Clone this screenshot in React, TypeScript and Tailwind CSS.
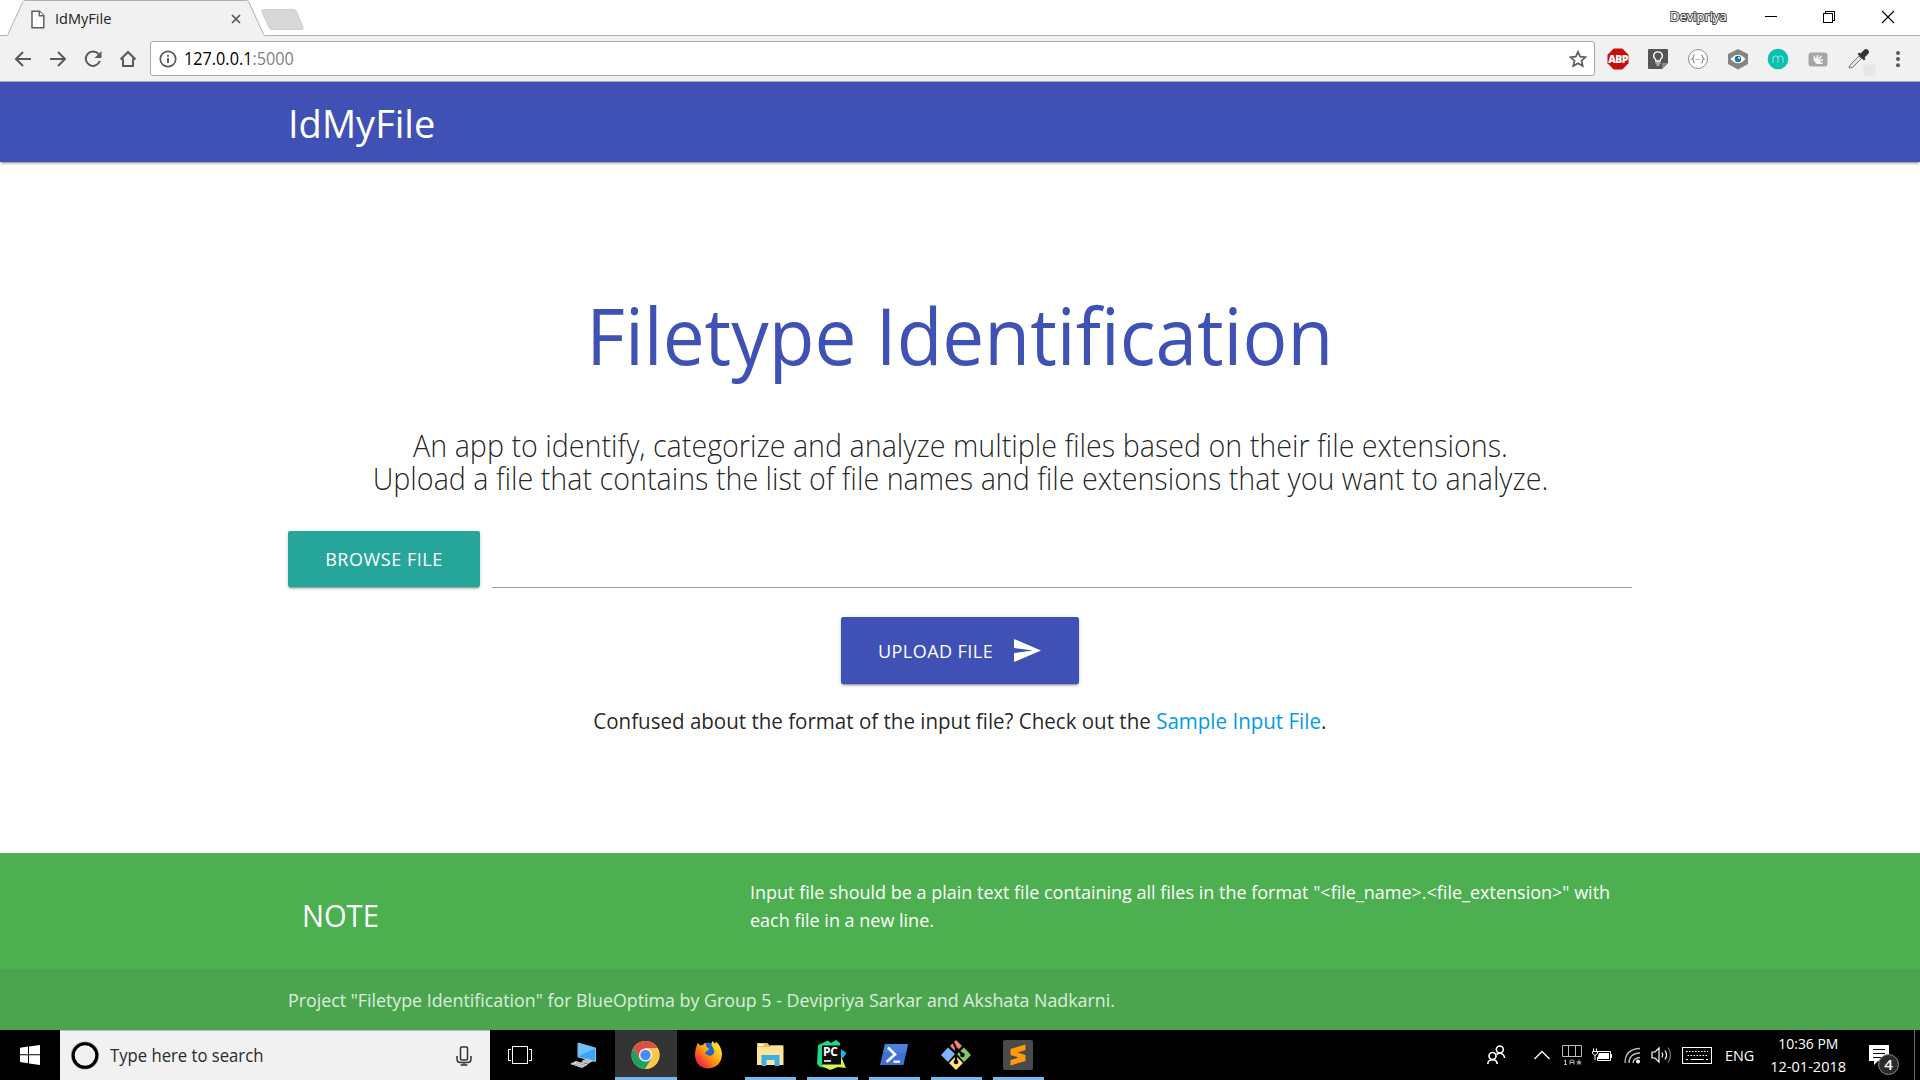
import type { ReactNode } from "react";

const shadow =
  "shadow-[0_2px_2px_0_rgba(0,0,0,0.14),0_1px_5px_0_rgba(0,0,0,0.12),0_3px_1px_-2px_rgba(0,0,0,0.2)]";

function TabStrip() {
  return (
    <div className="relative flex h-9 shrink-0 items-start bg-white">
      <svg className="absolute inset-0" width="1920" height="36" viewBox="0 0 1920 36" fill="none">
        <path d="M0 35.5H7C8 35.5 8 34 9 32L22.5 2.5C23.5 .5 24 .5 25 .5H246.500C248 .5 248.500 1 249 2.500L263 33C264 35.500 264 35.500 265 35.500H1920V36H0Z" fill="#f1f1f1" />
        <path d="M0 35.500H7C8 35.500 8 34 9 32L22.500 2.500C23.500 .5 24 .5 25 .5H246.500C248 .5 248.500 1 249 2.500L263 33C264 35.500 264 35.500 265 35.500H1920" stroke="#b0b0b0" />
        <path d="M263.500 9.500H293.500Q295.500 9.500 296.500 11.500L303 27Q304 29.500 301.500 29.500H272Q270 29.500 269 27.500L262 12Q261 9.500 263.500 9.500Z" fill="#d8d8d8" stroke="#cfcfcf" />
      </svg>
      <div className="relative flex h-[38px] w-[265px] items-center pl-[31px]">
        <svg width="14" height="19" viewBox="0 0 14 19" fill="#fff" stroke="#5f5f5f" strokeWidth="1.500">
          <path d="M1 1.200H8.500L12.800 5.500V17.800H1Z" />
          <path d="M8.300 1.200V5.800H12.800" />
        </svg>
        <span className="mb-0.5 ml-[10px] w-[175px] origin-left scale-x-[0.970] text-[15px] leading-5 text-[#222]">
          IdMyFile
        </span>
        <svg width="12" height="12" viewBox="0 0 12 12" stroke="#555" strokeWidth="1.700">
          <path d="M2 2L10 10M10 2L2 10" />
        </svg>
      </div>
      <div className="relative ml-auto flex h-8 items-center">
        <span className="w-[95px] text-[13px] leading-5 text-white [paint-order:stroke_fill] [-webkit-text-stroke:2px_#4a4a4a]">
          Devipriya
        </span>
        <svg width="155" height="32" viewBox="0 0 155 32" fill="none" stroke="#000" strokeWidth="1.100" shapeRendering="crispEdges">
          <path d="M0 16.500H12" />
          <path d="M58.500 13.500H67.500V22.500H58.500ZM60.500 13V11.500H69.500V20.500H68" />
          <path d="M117 11L129 23M129 11L117 23" shapeRendering="auto" />
        </svg>
      </div>
    </div>
  );
}

function Ext({ children }: { children: ReactNode }) {
  return (
    <span className="flex w-10 shrink-0 items-center justify-center">
      <svg width="24" height="34" viewBox="0 0 24 34" fill="none" overflow="visible">
        {children}
      </svg>
    </span>
  );
}

function Toolbar() {
  return (
    <div className="flex h-[46px] shrink-0 items-center border-b border-[#b3b3b3] bg-[#f1f1f1]">
      <div className="flex w-[150px] shrink-0 items-center gap-[15px] pl-[13px] text-[#5a5a5a]">
        <svg width="20" height="20" viewBox="0 0 20 20" fill="none" stroke="currentColor" strokeWidth="2">
          <path d="M18 10H3.500M10 3L3 10L10 17" />
        </svg>
        <svg width="20" height="20" viewBox="0 0 20 20" fill="none" stroke="currentColor" strokeWidth="2">
          <path d="M2 10H16.500M10 3L17 10L10 17" />
        </svg>
        <svg width="20" height="20" viewBox="0 0 20 20" fill="none" stroke="currentColor" strokeWidth="2">
          <path d="M15.600 5.200A7.200 7.200 0 1 0 16.800 12" />
          <path d="M18.500 2V9H11.500Z" fill="currentColor" stroke="none" />
        </svg>
        <svg width="20" height="20" viewBox="0 0 20 20" fill="none" stroke="currentColor" strokeWidth="2">
          <path d="M2.500 10.500L10 3L17.500 10.500M5 9.500V17H15V9.500" />
        </svg>
      </div>
      <div className="flex h-[35px] w-[1445px] shrink-0 items-center rounded-[3px] border border-[#a8a8a8] bg-white pr-[7px] pl-[8px]">
        <svg width="18" height="18" viewBox="0 0 18 18" fill="none" stroke="#5a5a5a" strokeWidth="1.700">
          <circle cx="9" cy="9" r="7.700" />
          <path d="M9 8V13M9 5V6.700" strokeWidth="1.900" />
        </svg>
        <span className="mb-px ml-[7px] grow origin-left scale-x-[0.927] text-[17.500px] leading-6 text-black">
          127.0.0.1<span className="text-[#808080]">:5000</span>
        </span>
        <svg width="18" height="18" viewBox="0 0 18 18" fill="none" stroke="#5a5a5a" strokeWidth="1.700">
          <path d="M9 1.800L11.200 6.700L16.500 7.200L12.500 10.700L13.700 16L9 13.200L4.300 16L5.500 10.700L1.500 7.200L6.800 6.700Z" />
        </svg>
      </div>
      <div className="ml-[2.500px] flex">
        <Ext>
          <path d="M7.700 6.500H16.300L22.500 12.700V21.300L16.300 27.500H7.700L1.500 21.300V12.700Z" fill="#c70d0d" />
          <text x="12" y="21" textAnchor="middle" fontFamily="Open Sans" fontSize="10.500" fontWeight="800" letterSpacing="-0.600" fill="#fff">ABP</text>
        </Ext>
        <Ext>
          <path d="M3 7H21Q22 7 22 8V21L16 27H3Q2 27 2 26V8Q2 7 3 7Z" fill="#555" />
          <path d="M22 21L16 27V21Z" fill="#8a8a8a" />
          <path d="M9.700 19V17.500C6 15 7.500 9.800 12 9.800S18 15 14.300 17.500V19Z" stroke="#fff" strokeWidth="1.300" />
          <path d="M9.500 21H14.500M10.500 23H13.500" stroke="#fff" strokeWidth="1.200" />
        </Ext>
        <Ext>
          <circle cx="12" cy="17" r="9.500" fill="#fff" stroke="#8c8c8c" />
          <path d="M8.800 13Q7.500 13 7.500 14.500T6 17Q7.500 17 7.500 19T8.800 21M15.200 13Q16.500 13 16.500 14.500T18 17Q16.500 17 16.500 19T15.200 21M9.700 17.500H10.700M11.600 17.500H12.500M13.400 17.500H14.300" stroke="#8c8c8c" strokeWidth="1.200" />
        </Ext>
        <Ext>
          <path d="M12 7L22 12V22L12 27.500L2 22V12Z" fill="#858585" />
          <path d="M4.500 17Q12 8.500 19.500 17Q12 25.500 4.500 17Z" fill="#fff" />
          <circle cx="12" cy="17" r="3.200" fill="#1c78ab" />
          <circle cx="13" cy="16" r="1" fill="#fff" />
        </Ext>
        <Ext>
          <circle cx="12" cy="17" r="10.300" fill="#0bbfb0" />
          <path d="M7 21V14.500M7 17Q7 14 9.500 14T12 17V21M12 17Q12 14 14.500 14T17 17V21" stroke="#7be6dd" strokeWidth="1.100" />
        </Ext>
        <Ext>
          <rect x="2.500" y="10.500" width="19" height="14" rx="3" fill="#a5a5a5" />
          <path d="M8 13C6.500 17 8.500 21.500 12 22H16.500V20.500L13 20L17 18.500V17L13 18L16 14.500L15 13.500L12 17L12.500 13H11L10 17Z" fill="#f5f5f5" />
        </Ext>
        <Ext>
          <rect x="17.500" y="22.500" width="12" height="12" fill="#e6e6e6" />
          <path d="M3 26L4 23.200L13 14L15.500 16.500L6.500 25.500Z" fill="#e3e3e3" stroke="#777" />
          <path d="M11.500 12L13.300 10.500L14.500 11.500L18 8Q20 6 22 8T22 12L18.500 15.500L19.500 17L18 18.500Z" fill="#333" />
        </Ext>
        <Ext>
          <g fill="#5a5a5a">
            <circle cx="12" cy="11" r="2" />
            <circle cx="12" cy="17" r="2" />
            <circle cx="12" cy="23.300" r="2" />
          </g>
        </Ext>
      </div>
    </div>
  );
}

function Page() {
  return (
    <main className="flex grow flex-col bg-white text-black/87">
      <nav className={`relative flex h-20 items-center bg-[#3f51b5] ${shadow}`}>
        <div className="mx-auto w-[1344px] origin-left scale-x-[0.975] pt-px text-[39px] leading-[80px] text-white">
          IdMyFile
        </div>
      </nav>

      <div className="mx-auto flex w-[1344px] grow flex-col items-center">
        <h1 className="mt-[130px] scale-x-[0.958] text-[78px] leading-[86px] whitespace-nowrap text-[#3f51b5]">
          Filetype Identification
        </h1>
        <h5 className="mt-[51px] scale-x-[0.925] text-center text-[31px] leading-[33px] font-light whitespace-nowrap">
          An app to identify, categorize and analyze multiple files based on their file extensions.
          <br />
          Upload a file that contains the list of file names and file extensions that you want to analyze.
        </h5>
        <div className="mt-9 flex w-full">
          <button className={`h-14 w-48 rounded-xs bg-[#26a69a] text-[18px] tracking-[0.550px] text-white ${shadow}`}>
            BROWSE FILE
          </button>
          <div className="ml-3 h-[57px] grow border-b border-[#9e9e9e]" />
        </div>
        <button
          className={`mt-[29px] flex h-[67px] w-[238px] items-center rounded-xs bg-[#3f51b5] pl-[37px] text-[18px] tracking-[0.450px] text-white ${shadow}`}
        >
          <span className="w-[136px] pt-0.5 text-left">UPLOAD FILE</span>
          <svg width="27" height="23" viewBox="0 0 27 23" fill="#fff">
            <path d="M0 0L27 11.500L0 23V14L19 11.500L0 9Z" />
          </svg>
        </button>
        <p className="mt-[20px] scale-x-[0.933] text-[22px] leading-8 whitespace-nowrap">
          Confused about the format of the input file? Check out the{" "}
          <span className="text-[#039be5]">Sample Input File</span>.
        </p>
      </div>

      <footer className="shrink-0 bg-[#4caf50] text-white">
        <div className="mx-auto flex h-[116px] w-[1344px]">
          <div className="ml-[14px] w-[448px] shrink-0 origin-left scale-x-[0.940] pt-[42px] text-[31px] leading-10">NOTE</div>
          <p className="shrink-0 origin-left scale-x-[0.947] pt-[25px] text-[19px] leading-7 whitespace-nowrap">
            Input file should be a plain text file containing all files in the format
            {' "<file_name>.<file_extension>" with'}
            <br />
            each file in a new line.
          </p>
        </div>
        <div className="bg-[#4aa54e]">
          <div className="mx-auto h-[61px] w-[1344px] origin-left scale-x-[0.937] pt-px text-[19px] leading-[61px] text-white/80">
            Project "Filetype Identification" for BlueOptima by Group 5 - Devipriya Sarkar and Akshata Nadkarni.
          </div>
        </div>
      </footer>
    </main>
  );
}

function Task({ children, open, active }: { children: ReactNode; open?: boolean; active?: boolean }) {
  return (
    <div className={`flex w-[61px] shrink-0 flex-col items-center ${active ? "mr-px -ml-px w-[62px] bg-[#333]" : "mr-px"}`}>
      <svg className="h-[47px] w-8" viewBox="0 0 32 47" fill="none">
        {children}
      </svg>
      <div className={`h-[3px] ${active ? "w-full bg-[#76b9ed]" : open ? "w-[51px] bg-[#76b9ed]" : ""}`} />
    </div>
  );
}

function Taskbar() {
  return (
    <div className="flex h-[50px] shrink-0 bg-black text-white">
      <div className="flex w-[60px] items-center justify-center">
        <svg width="20" height="20" viewBox="0 0 20 20" fill="#fff">
          <path d="M0 2.800L8 1.600V9.300H0ZM9 1.500L20 0V9.300H9ZM0 10.300H8V18.200L0 17ZM9 10.300H20V20L9 18.400Z" />
        </svg>
      </div>
      <div className="flex w-[430px] items-center border-t border-[#bbb] bg-[#f1f1f1] pr-[17px] pl-[10px]">
        <svg width="30" height="30" viewBox="0 0 30 30" fill="none">
          <circle cx="15" cy="14.500" r="12.500" stroke="#999" strokeWidth="3" />
          <circle cx="15" cy="14.500" r="11.800" stroke="#000" strokeWidth="3" />
        </svg>
        <span className="mb-px ml-[10px] grow origin-left scale-x-[0.926] text-[18px] leading-6 text-[#2b2b2b]">
          Type here to search
        </span>
        <svg className="mr-px" width="16" height="20" viewBox="0 0 16 20" fill="none" stroke="#333" strokeWidth="1.500">
          <rect x="4.500" y="1" width="7" height="13" rx="1" />
          <path d="M1 10V13Q1 16.500 4.500 16.500H11.500Q15 16.500 15 13V10M8 16.500V19M4.500 19H11.500" />
        </svg>
      </div>
      <div className="flex w-16 items-center justify-center pr-1">
        <svg width="24" height="20" viewBox="0 0 24 20" fill="none" stroke="#fff" shapeRendering="crispEdges">
          <path d="M4.500 1.500H19.500V18.500H4.500ZM3 4.500H.5V15.500H3M21 4.500H23.500V15.500H21" />
        </svg>
      </div>
      <Task>
        <path d="M9 13L26.500 18V31.500L9 27Z" fill="#35a7f5" stroke="#8fc3e6" />
        <path d="M9.500 13.500L26 18.500L9.500 26Z" fill="#6cc4fa" />
        <path d="M14 30L18 28.500L25 30.500L19 34L12 32.500Z" fill="#b9c2c8" />
        <path d="M1 34L7 31L19 34.500L13 38Z" fill="#d5dade" />
        <path d="M4 34L14 36.500M7 32.500L16 35.200" stroke="#8c969c" strokeWidth=".8" />
      </Task>
      <Task active>
        <circle cx="15.500" cy="25" r="14" fill="#fcc84c" />
        <path d="M3.400 18A14 14 0 0 1 27.600 18H15.500L9.500 28.500Z" fill="#da4f43" />
        <path d="M3.400 18A14 14 0 0 0 15 39L21.500 28.500L15.500 25L9.400 28.500Z" fill="#1fa060" />
        <path d="M15.500 18H27.600A14 14 0 0 1 15 39L22 28Z" fill="#fcc84c" />
        <circle cx="15.500" cy="25" r="6.600" fill="#f4f4f4" />
        <circle cx="15.500" cy="25" r="5.200" fill="#4b8bf5" />
      </Task>
      <Task>
        <defs>
          <linearGradient id="fox" x1="1" y1="0" x2="0" y2="1">
            <stop offset=".15" stopColor="#ffe52e" />
            <stop offset=".5" stopColor="#ff9a0e" />
            <stop offset=".8" stopColor="#f5313c" />
            <stop offset="1" stopColor="#d8158c" />
          </linearGradient>
        </defs>
        <g transform="translate(-.5 0)">
          <circle cx="16" cy="22.500" r="10" fill="#1768cf" />
          <path d="M3.500 18L5 13L8 15.500L10.500 15L13 12.500L14 17L17 19L14 21.500L12.500 23Q15 26.500 19 25.500Q24 22 20 17Q18 14 20 11L22 13.500L24 12Q29 17 29.500 24Q29 37 16 38.500Q4 38 2.500 26Q2.500 21 3.500 18Z" fill="url(#fox)" />
        </g>
      </Task>
      <Task open>
        <g transform="translate(-.5 0)">
          <path d="M2.500 13H13L15 15.500H28V34H2.500Z" fill="#f5c23b" />
          <path d="M4 14H9V16H4Z" fill="#fff" />
          <path d="M2.500 17H15L17 15.500H29V35H2.500Z" fill="#ffe59a" />
          <path d="M7 25H25V36H20V30H12V36H7Z" fill="#3cb0e5" />
        </g>
      </Task>
      <Task open>
        <g transform="translate(-1 0)">
          <path d="M2 15L12 10.500L15 13L20 10L24 13V18L17 39L4 37L1 34Z" fill="#21d789" />
          <path d="M22 17L30.500 23L27 28L21 27Z" fill="#18b7e8" />
          <path d="M24 24L30 38L22 37L14 40L6 36L4 39L8 33L20 33Z" fill="#d8f24a" />
          <path d="M6 15.500H25V34.500H6Z" fill="#0b0b0b" />
          <text x="7" y="26" fontFamily="Open Sans" fontWeight="700" fontSize="12" letterSpacing="-.3" fill="#fff">PC</text>
          <path d="M8 31H15" stroke="#fff" strokeWidth="1.600" />
        </g>
      </Task>
      <Task open>
        <g transform="translate(-1 0)">
          <path d="M7 14H30L25.500 35H2Z" fill="#3f72d6" />
          <path d="M7 14H30L28 23L5 22Z" fill="#5688e4" opacity=".6" />
          <path d="M10 17.500L17 24.500L8.500 32" stroke="#fff" strokeWidth="2.600" />
          <path d="M15.500 31.700H22" stroke="#fff" strokeWidth="2.200" />
        </g>
      </Task>
      <Task open>
        <g transform="translate(-1 0)">
          <path d="M16 10L22 16L16 22L10 16Z" fill="#f98080" />
          <path d="M8 17.500L15 24L8 32L1 25Z" fill="#80b3ff" />
          <path d="M24 17.500L31 25L24 32L17 24Z" fill="#80c862" />
          <path d="M16 26L23 33L16 40L9 33Z" fill="#ffe080" />
          <path d="M13 12L16 18V33M16 18L22 24" stroke="#0a0a0a" strokeWidth="2.200" />
          <circle cx="16" cy="32" r="2.300" fill="#0a0a0a" />
          <circle cx="22.500" cy="25" r="2.300" fill="#0a0a0a" />
        </g>
      </Task>
      <Task open>
        <g transform="translate(-1 0)">
          <rect x="1" y="10" width="30" height="30" rx="2" fill="#4a4a4a" />
          <path d="M23.500 14.500V20L15.500 22.500L23.500 25V31L8.500 35.500V30L16.500 27.500L8.500 25V19Z" fill="#ff9a0a" />
        </g>
      </Task>

      <div className="ml-auto flex items-center text-[15px]">
        <svg className="mr-[28px]" width="19" height="20" viewBox="0 0 19 20" fill="none" stroke="#fff" strokeWidth="1.600">
          <circle cx="5.500" cy="11" r="3.500" />
          <path d="M.8 19Q1 14.800 5.500 14.800T10.200 19" />
          <circle cx="12.800" cy="4.500" r="3.500" />
          <path d="M9.500 9.500Q13 7 16 9.500Q17.500 11 17.500 13" />
        </svg>
        <svg className="mr-[12px]" width="16" height="10" viewBox="0 0 16 10" fill="none" stroke="#fff" strokeWidth="1.400">
          <path d="M.5 9L8 1.500L15.500 9" />
        </svg>
        <svg className="mr-[10px]" width="20" height="20" viewBox="0 0 20 20" fill="none" stroke="#bbb">
          <path d="M.5 .5H19.500V11.500H.5ZM6.500 .5V11.500M13.500 .5V11.500" />
          <path d="M2 16L3.500 15V19.500M2 19.500H5M8 19.500V16Q8 15 10 15T12 16V19.500M8 17.500H12M17 14.500V19.500M14.500 17H19.500M15 19.500L17 17L19 19.500" />
        </svg>
        <svg className="mr-[12px]" width="20" height="15" viewBox="0 0 20 15" fill="none" stroke="#fff">
          <path d="M5.500 3.500H18.500V12.500H5.500V9M19.500 6V10" />
          <path d="M7 5H17V11H6V8Z" fill="#fff" stroke="none" />
          <path d="M1.500 .5V3M4.500 .5V3M.5 3.500H5.500V5.500L3 7.500L.5 5.500ZM3 7V12" />
        </svg>
        <svg className="mr-[10px]" width="17" height="17" viewBox="0 0 17 17" fill="none" stroke="#bbb" strokeWidth="1.300">
          <path d="M1 16Q1 2 16 1.500M5 16Q5 6.500 16 6M9 16Q9.500 11 16 10.500" />
          <circle cx="14" cy="14.500" r="2" fill="#fff" stroke="none" />
        </svg>
        <svg className="mr-[10px]" width="21" height="18" viewBox="0 0 21 18" fill="none" stroke="#fff" strokeWidth="1.200">
          <path d="M1 6H4L8 2V16L4 12H1Z" />
          <path d="M11 6.500Q12.500 9 11 11.500M14 4.500Q17 9 14 13.500" />
          <path d="M17 1.500Q22 9 17 16.500" stroke="#777" />
        </svg>
        <svg className="mr-[13px]" width="30" height="17" viewBox="0 0 30 17" fill="none" stroke="#fff" strokeWidth="1.100">
          <path d="M.5 .5H29.500V16.500H.5Z" />
          <path d="M4 4.500H26M5.500 8.500H25" strokeDasharray="1.600 1.400" />
          <path d="M4 12.500H6M8.500 12.500H21.500M24 12.500H26" />
        </svg>
        <span className="w-[45px] origin-left scale-x-[0.960] leading-5">ENG</span>
        <div className="flex w-[76px] flex-col items-center leading-[23px] whitespace-nowrap">
          <span className="scale-x-[0.930]">10:36 PM</span>
          <span className="scale-x-[0.970]">12-01-2018</span>
        </div>
        <div className="relative ml-[23px] h-[50px] w-[45px]">
          <svg className="mt-[15px]" width="20" height="20" viewBox="0 0 20 20" fill="#fff">
            <path d="M0 0H20V16H9L5 20V16H0Z" />
            <path d="M4 4.500H16M4 8.500H16M4 12.500H12" stroke="#000" strokeWidth="1.100" />
          </svg>
          <span className="absolute top-[24px] left-[9px] flex size-[21px] items-center justify-center rounded-full border border-[#888] bg-[#2b2b2b] text-[15px] leading-none font-semibold">
            4
          </span>
        </div>
        <div className="mr-[5px] h-[50px] w-px bg-[#666]" />
      </div>
    </div>
  );
}

export default function App() {
  return (
    <div className="flex h-[1080px] w-[1920px] flex-col overflow-hidden bg-white font-['Open_Sans',sans-serif]">
      <TabStrip />
      <Toolbar />
      <Page />
      <Taskbar />
    </div>
  );
}
